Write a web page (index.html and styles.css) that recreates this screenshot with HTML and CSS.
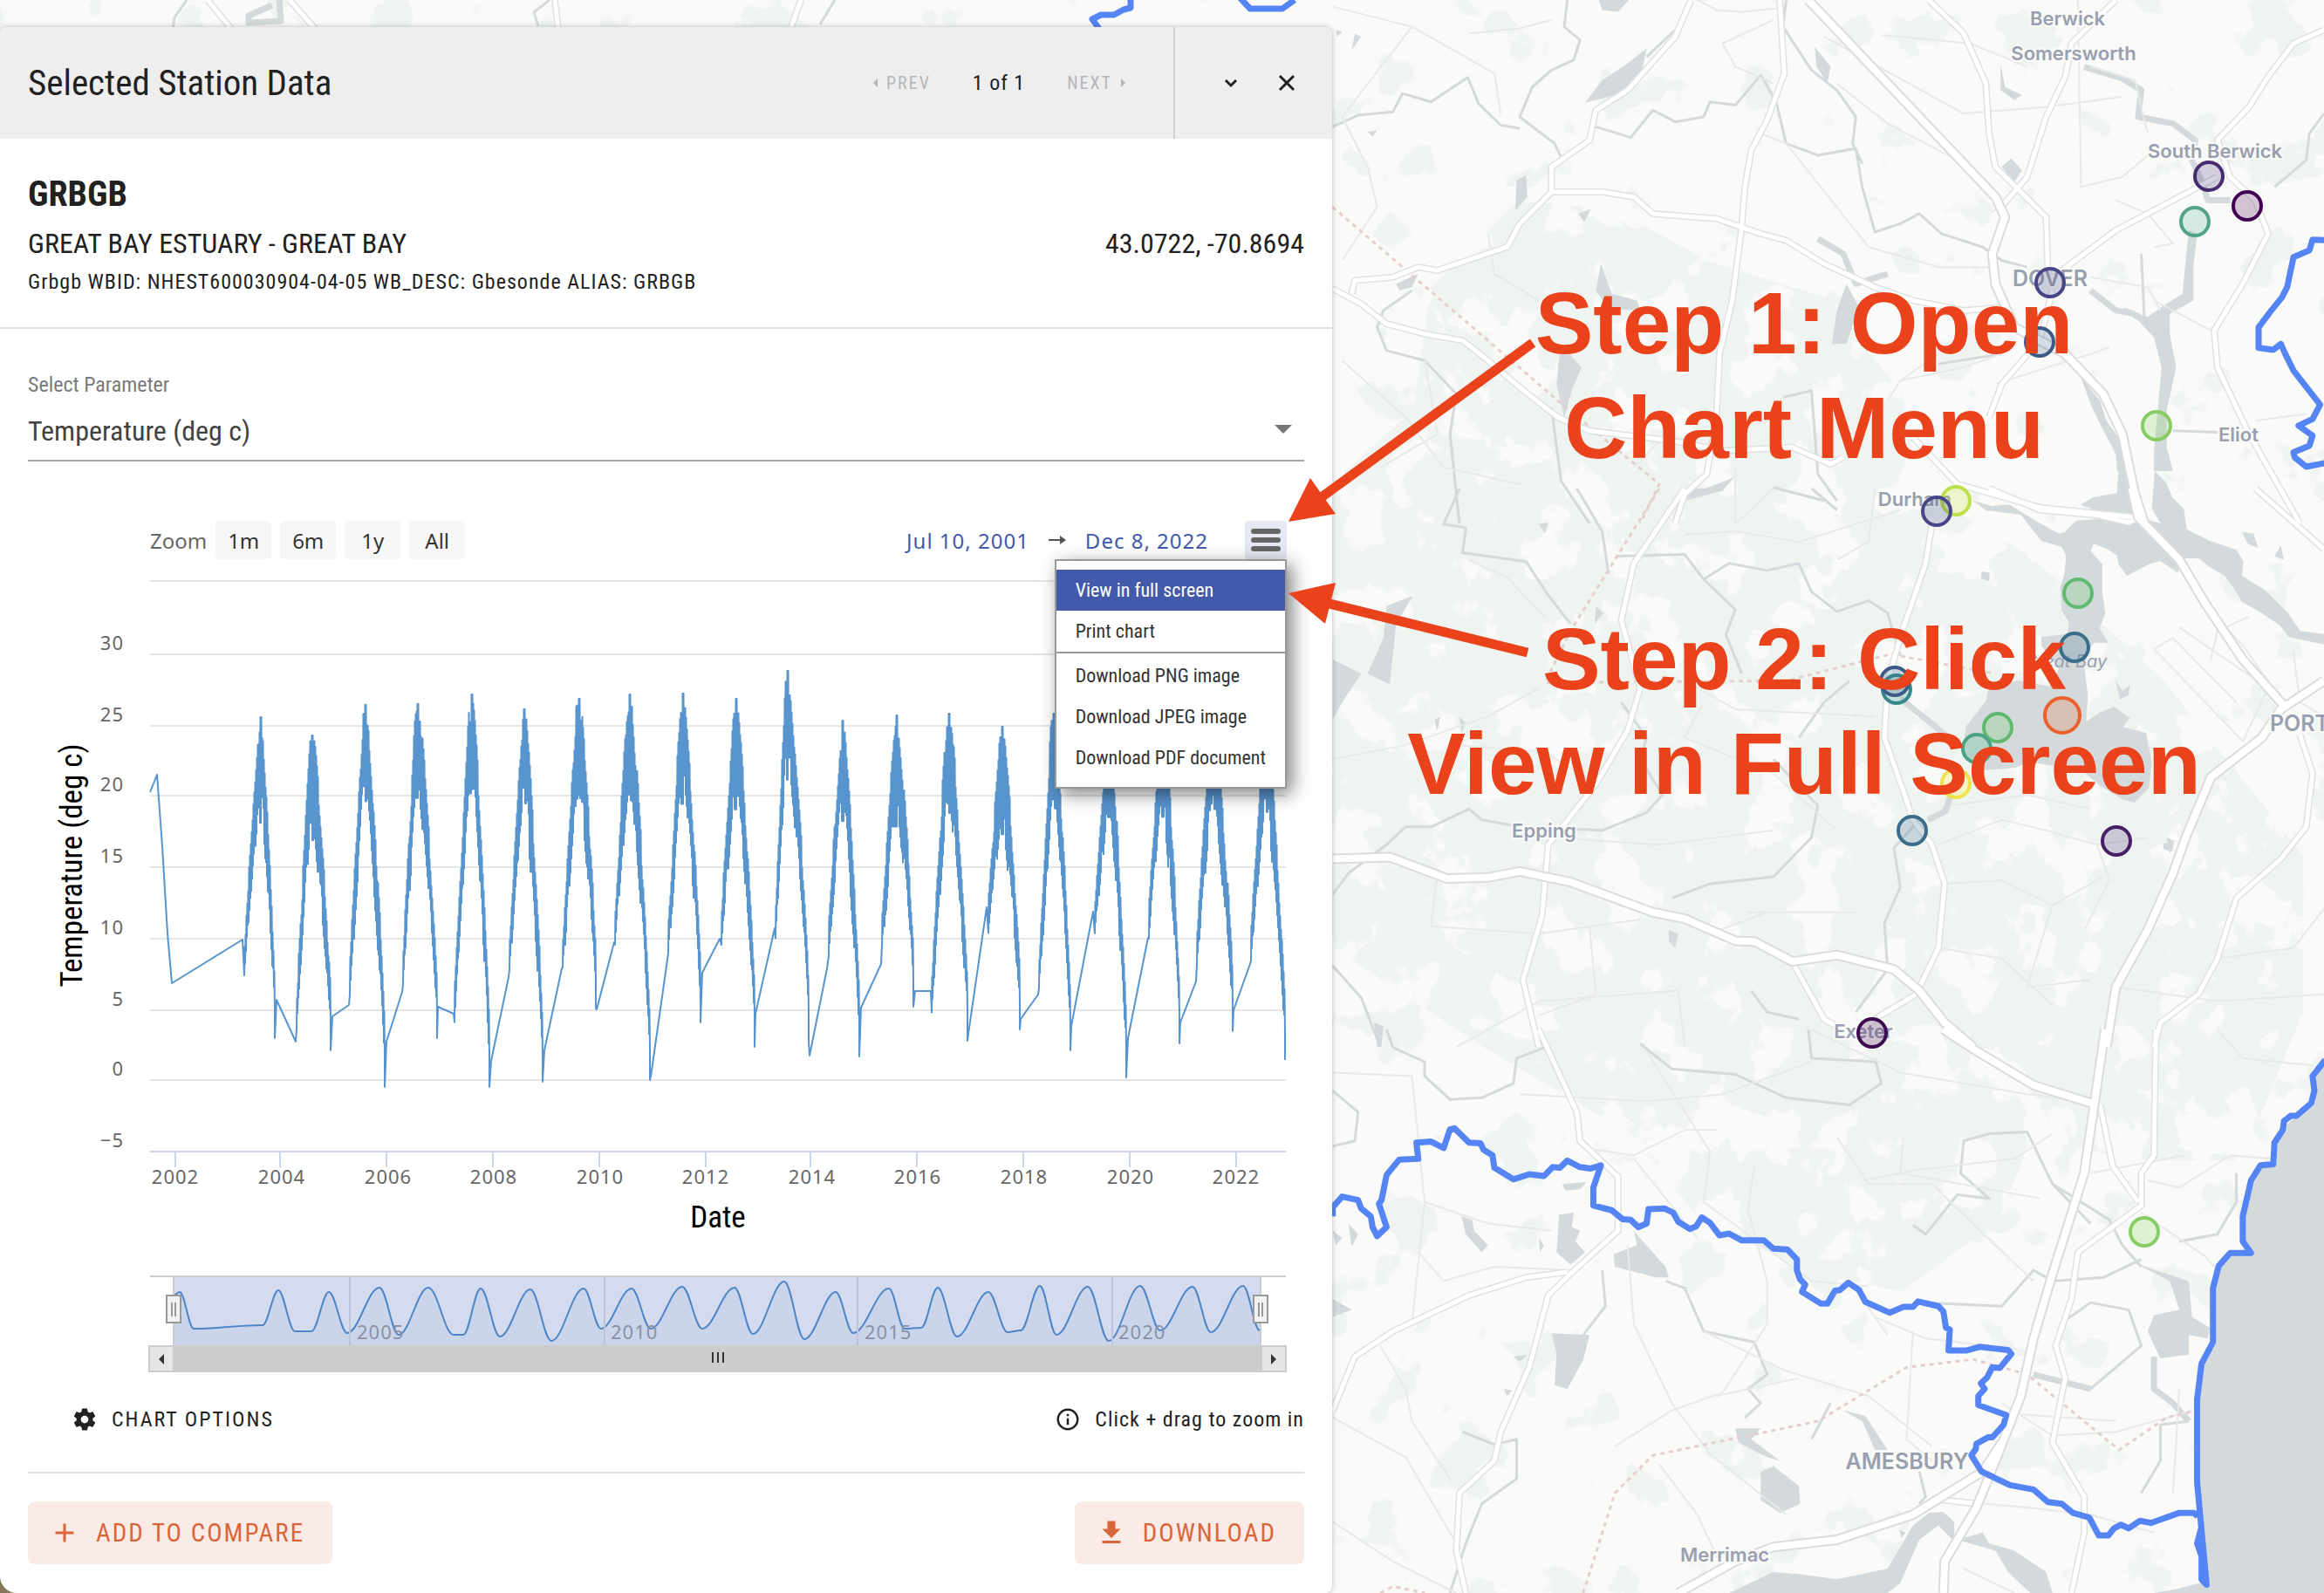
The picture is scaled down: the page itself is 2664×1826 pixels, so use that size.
FILE: index.html
```html
<!DOCTYPE html>
<html lang="en">
<head>
<meta charset="utf-8">
<title>Selected Station Data</title>
<link rel="stylesheet" href="styles.css">
</head>
<body>
<div class="app">
  <svg class="map" viewBox="0 0 2664 1826" preserveAspectRatio="xMinYMin slice" role="img" aria-label="Map of the Great Bay area">
    <defs>
      <filter id="woods" x="0" y="0" width="1" height="1" color-interpolation-filters="sRGB">
        <feTurbulence type="fractalNoise" baseFrequency="0.017 0.015" numOctaves="5" seed="7"/>
        <feColorMatrix values="0 0 0 0 .937  0 0 0 0 .957  0 0 0 0 .945  24 0 0 0 -9.8"/>
        <feComposite in2="SourceGraphic" operator="in"/>
      </filter>
      <filter id="groves" x="0" y="0" width="1" height="1" color-interpolation-filters="sRGB">
        <feTurbulence type="fractalNoise" baseFrequency="0.014" numOctaves="4" seed="21"/>
        <feColorMatrix values="0 0 0 0 .937  0 0 0 0 .957  0 0 0 0 .945  24 0 0 0 -15.4"/>
        <feComposite in2="SourceGraphic" operator="in"/>
      </filter>
      <path id="n-roads" d="M710 0L717 220L690 360L665 450L655 560L650 680L635 900L615 1060L610 1250L595 1420L560 1480L545 1568M570 0L545 110L470 270L420 330L410 420L350 500L350 575L430 575L480 590L510 640L610 655L680 700L720 720L780 790L860 860L920 900L1000 930L1070 920M350 575L300 670L280 740L170 810L140 800L100 830L40 840L35 880M5 865L50 910L90 970L150 1000L210 1020L250 1080L300 1160L360 1250L410 1290L540 1320L620 1350L730 1340L790 1390L810 1370M945 0L1000 100L1035 250L1040 400L1050 500L1130 650L1133 830M1240 0L1170 130L1160 230L1130 350L1100 530L1050 640M1568 90L1520 130L1480 230L1450 320L1400 420L1420 530L1460 600L1480 700L1440 850L1395 990L1400 1100L1450 1300L1530 1568M1140 830L1240 690L1400 530M1140 870L1120 1020L1060 1150L1040 1250M920 1310L990 1450L1120 1520L1275 1550"/>
      <path id="n-major" d="M755 0L1050 590L1065 650L1045 760L1050 850L1080 980L1160 1060L1220 1180L1250 1300L1270 1480L1285 1568"/>
      <path id="c-roads" d="M1040 0L1120 60L1210 75L1260 95L1280 80M560 0L480 210L460 370L490 560L470 680L420 830L345 1000L335 1200L305 1380L330 1568M950 100L940 210L905 390L880 540L875 700L905 850L920 930L950 1000L970 1110L960 1290L925 1420L850 1500M730 1330L780 1490L800 1510M1530 690L1550 800L1540 950L1500 1040L1430 1150L1400 1320L1370 1420L1310 1500L1300 1568M1460 0L1568 170"/>
      <path id="c-major" d="M1265 0L1275 80L1340 200L1380 320L1440 480L1505 610M1568 540L1500 620L1470 700L1390 810L1350 980L1330 1080L1290 1240L1240 1400L1225 1568M5 1040L95 1035L185 1095L250 1092L300 1075L380 1105L510 1190L560 1208L640 1270L670 1272L730 1328L800 1310L890 1350L930 1410L970 1500L1015 1568"/>
      <path id="s-roads" d="M1303 0L1300 350L1280 400L1280 490L1180 620L1170 750L1145 880L1160 970L1140 1150L1190 1300L1190 1400L1170 1568M1215 210L1235 380L1275 480M330 0L390 230L395 310L455 410L455 560L380 680L345 740L315 940L270 1120L260 1200L205 1290L200 1450L215 1568M375 675L310 690L220 740L100 840L40 910L5 1060M950 1305L1020 1320"/>
      <path id="s-major" d="M1223 0L1190 400L1140 680L1110 860L1090 1020L1050 1200L1020 1330L970 1480L968 1568M968 0L1020 60L1110 155L1210 210M550 1568L640 1480L700 1440L800 1420L920 1350L1030 1230L1060 1150"/>
      <path id="t-roads" d="M238 0L266 34M332 0L362 34M918 0L906 34M636 0L640 34"/>
    </defs>
    <rect class="land" width="2664" height="1826"/>
    <path filter="url(#groves)" d="M0 0H2664V1826H1520V40H0Z"/>
    <path filter="url(#woods)" d="M1520 560L1620 470L1640 330L1740 230L1850 240L1960 300L2090 340L2180 450L2200 560L2330 640L2480 780L2560 880L2640 980V1160L2570 1330L2440 1330L2330 1300L2290 1400L2180 1480L2080 1460L1950 1400L1870 1300L1700 1200L1520 1080Z"/>

    <g transform="translate(1524 0) scale(.727 .3827)">
      <path class="water" d="M500 145L490 240L450 285L403 308L430 240L470 190ZM425 0H472L455 35L430 30ZM295 540L310 525L312 590L293 632ZM815 850L835 920L815 1030L792 1030L800 930ZM428 790L445 880L485 900L490 930L440 925L420 870ZM365 1030L397 1100L382 1170L370 1250L358 1150ZM1060 500L1075 475L1092 510L1080 545ZM1058 190L1065 260L1092 285L1080 300L1058 270ZM765 140L790 200L785 250L768 200ZM105 850L140 820L130 860L110 870ZM570 1480L638 1430L620 1470L560 1500ZM392 640L412 625L402 665ZM40 100L50 110L35 150ZM10 90L20 95L12 110ZM60 395L75 390L68 410Z"/>
      <path class="water" d="M1355 690L1368 700L1362 800L1362 900L1325 940L1325 1000L1335 1100L1320 1230L1320 1340L1330 1411H1300L1300 1350L1305 1250L1312 1100L1300 1010L1275 960L1250 930L1255 922L1290 950L1312 920L1345 880L1350 780ZM1185 1130L1215 1200L1225 1260L1255 1340L1258 1411H1242L1240 1360L1215 1270L1200 1210Z"/>
      <path class="river" d="M375 0L370 80L395 120L385 180L350 210L320 260L300 350L355 430L365 470M5 380L45 345L100 335L115 280L160 305L218 232L235 310L270 375L300 385M420 380L475 412L510 330L545 365L590 350L600 305L640 315L680 225L700 290M705 310L720 430L770 465L830 445L840 560L860 695L900 670L930 640L965 700L1030 740L1060 780L1100 800M720 0L715 80L760 210L800 270L830 350L825 430L840 490M130 870L85 930L75 980L90 1050L150 1080L200 1180L190 1300L205 1568M545 90L500 170M350 1220L365 1440L410 1568M715 1190L760 1170L770 1420L800 1500M1568 340L1545 400L1540 480L1490 560M1280 760L1285 960M1330 1290L1400 1295M960 1090L1060 1060M700 1460L780 1500"/>
      <path class="river wide" d="M1190 200L1250 235L1280 270L1275 350L1330 370L1365 420L1360 480L1375 540L1385 600L1420 600M1200 870L1240 930L1270 940M770 715L810 760L830 850L880 820"/>
      <path class="lane" d="M5 20L130 80L20 350L60 500L75 620L20 780M220 100L300 85L350 60M130 80L260 220L270 340M620 130L700 60M580 0L610 30L650 35L710 25M620 130L640 200L700 250M780 110L1000 340L1130 320L1250 290M870 105L1010 130L1100 200M800 250L880 370L1010 500L1060 640M1180 0L1185 560L1250 530L1300 450M1200 200L1270 240L1290 400M680 400L720 430L850 740L960 800L1040 800M1300 740L1330 730L1290 640L1240 600M1200 830L1290 860L1310 930M20 1080L120 1250L180 1400L300 1450M150 1080L170 1300L80 1400M250 700L260 820L330 900M900 1140L1000 1100L1060 1060M1050 1150L1200 1060L1230 1040M880 1200L900 1140L960 1060M480 1400L520 1320M640 1400L640 1568M1460 1260L1540 1240M1400 1000L1300 900"/>
      <path class="dashed" d="M5 620L360 1200L520 1450L490 1568"/>
    </g>

    <g transform="translate(2200 540) scale(.3333)">
      <path class="water" d="M810 0L850 40L870 90L910 130L920 200L1000 240L1090 270L1115 310L1110 360L1190 410L1270 490L1310 550L1392 560V596L1270 570L1240 530L1180 490L1110 450L1080 400L1050 360L1000 330L960 300L900 300L890 350L830 310L790 320L715 360L685 320L680 290L650 270L600 250L590 275L630 320L630 420L640 490L620 540L650 590L600 590L565 650L580 770L575 860L620 830L670 810L725 850L700 880L780 900L800 1000L790 1090L740 1140L700 1130L620 1080L560 1030L380 1000L330 1020L210 1030L150 970L160 880L230 790L240 740L340 720L450 740L480 680L420 600L420 570L510 560L515 520L490 480L485 400L500 350L505 290L490 260L420 240L380 190L350 150L230 135L180 100L250 120L310 115L400 170L480 215L500 210L540 170L620 165L700 180L755 160L830 180L800 130ZM685 0H720L725 90L755 160L700 165L620 140L555 115L600 90L680 75ZM675 720L700 755L725 735L720 770L690 785ZM1110 210L1150 215L1165 265L1130 250ZM215 345L243 350L240 378L212 370ZM840 1280H875L870 1310L840 1300Z"/>
      <path class="river wide" d="M110 1110L90 1170L30 1200"/>
    </g>

    <g transform="translate(1524 560) scale(.727 .4082)">
      <path class="water" d="M132 300L105 380L95 550L60 520L85 420L90 330ZM5 480L50 520L20 600L5 650ZM555 30L600 0H570ZM535 1240L550 1250L545 1290L535 1270ZM330 100L345 95L340 125ZM1505 200L1490 190L1500 160ZM420 330L432 350L418 380ZM1320 980L1332 990L1325 1025ZM70 1500L85 1510L82 1568H75ZM205 640L215 660L208 685ZM165 650L175 640L170 680Z"/>
      <path class="river" d="M205 0L180 100L215 110L210 180L310 205L345 300L380 380M390 0L430 120L440 240M455 190L560 185L590 255L630 210L690 230L740 210L760 290L800 345L850 315L880 350L900 470M590 255L640 340L625 410L650 520M5 1140L30 1080L90 1000L120 950L160 950L220 900L240 930L300 950L430 960L500 910L525 860L490 760L500 700L460 600M930 930L890 1010L900 1120L875 1220L880 1350L830 1470M540 1150L600 1110L700 1090L760 980L770 890L700 760M5 1340L50 1430L80 1568M760 0L800 60M665 1410L690 1470L740 1490M820 540L780 600L740 700"/>
      <path class="river wide" d="M900 590L950 660L975 700"/>
      <path class="lane" d="M220 200L280 250L340 360M560 130L640 120L740 150L900 60M700 0L640 100M860 0L850 150L800 200M5 760L120 720L250 640L330 560M200 720L340 740L420 830M560 540L640 620L860 640M590 600L560 700L700 800L800 960M345 980L520 1000L700 960M170 1080L160 1230L330 1250L490 1210M410 1230L420 1420L330 1480M660 1190L830 1190M600 1250L690 1190M960 1000L1060 930L1130 960L1210 1000L1290 980M970 1110L1060 1100L1140 1170L1220 1090M1140 1170L1100 1400L1200 1380M1210 1000L1230 1100L1190 1240M1240 1400L1400 1440L1568 1420M1400 1320L1520 1290L1568 1180M1430 600L1330 420L1300 450L1440 710L1480 560L1340 390M1390 480L1400 400L1450 360M1370 310L1440 440L1500 590M1200 900L1100 860L980 890M550 1410L330 1440L200 1568M550 1410L560 1568M960 1290L1060 1320L1140 1450M1520 460L1530 600L1568 640"/>
      <path class="dashed" d="M520 0L380 400L340 545L720 540L885 465L1050 520"/>
    </g>

    <g transform="translate(1524 1180) scale(.727 .412)">
      <path class="water" d="M1575 85L1550 130L1555 170L1548 200L1525 240L1500 280L1488 375L1465 380L1450 440L1440 520L1440 590L1455 620L1420 622L1400 660L1393 720V870L1375 930L1368 1030V1260L1375 1400L1383 1535L1340 1555L1300 1568H1575Z"/>
      <path class="water" d="M208 520L225 530L228 560L250 600L240 620L215 570ZM362 515L385 510L382 550L395 560L388 590L403 620L380 655L358 620ZM367 430L405 425L395 445L372 448ZM330 580L338 600L332 620ZM480 560L497 595L530 660L535 690L515 690L450 660L448 625L485 600ZM350 845L410 850L400 920L375 1000L355 990L358 900ZM680 1230L700 1215L740 1270L742 1320L710 1345L680 1310ZM640 1110L680 1110L665 1140L710 1200L690 1190L645 1150ZM1270 650L1320 680L1355 700L1360 800L1388 830L1385 860L1355 850L1355 905L1310 915L1290 840L1300 795L1340 780L1325 700ZM630 1568L700 1510L740 1515L800 1530L880 1500L920 1380L945 1345L968 1342L985 1370L985 1425L960 1380L930 1420L900 1540L880 1568ZM990 1420L1030 1400L1040 1430L1080 1450L1130 1510L1140 1568H1105L1070 1510L1050 1450L1010 1430ZM810 1060L845 1075L880 1170L860 1170L840 1090ZM5 750L35 780L5 800ZM30 540L45 570L35 605ZM5 560L20 580L10 600ZM275 1000L288 1005L280 1020ZM290 910L312 905L300 925ZM898 1390L908 1400L902 1415Z"/>
      <path class="river" d="M90 0L100 50L150 90L150 130L190 195L240 190L290 150L295 80L340 50M490 40L540 110L640 125L720 190L820 210L870 150L860 80M530 700L560 720L590 840L670 870L690 960L660 1000L680 1040L655 1080M1040 290L1000 310L995 400L1040 470L990 460L940 570L920 545M1040 290L1100 285L1140 430L1230 530L1250 600L1280 660M930 760L1060 770L1110 670L1140 700L1220 690L1280 640M1160 810L1200 760L1260 780L1280 880L1200 1000L1110 960M1355 1090L1310 1100L1310 1200L1280 1290M210 1120L260 1155L295 1140V1250L240 1320L215 1430L190 1568M5 170L45 230L40 310L5 325M430 670L435 770L400 850M1340 590L1400 570L1430 480L1430 400M790 1040L760 1140M930 1230L940 1300L930 1320M1200 540L1140 430M755 0L760 80L860 90"/>
      <path class="river wide" d="M1300 910L1300 1000L1330 1040L1355 1090M1110 960L1200 1000"/>
      <path class="lane" d="M5 120L130 130L150 480L130 820M150 480L250 540L350 560M140 620L180 700L260 660L380 670M300 180L500 200L620 180L760 90M400 330L480 350L560 280L610 280M500 60L600 340L590 480L760 700L850 715M760 0L900 120L1100 180L1200 200M670 380L660 500L690 700L690 820L620 1010L540 1060L450 1160M470 600L480 820L540 1040L600 1180L720 1350M590 840L720 950L850 1020L950 1160M800 300L850 430L950 430L1050 600L1110 700M840 420L930 390L1080 360L1140 290M905 300L900 400L1120 470M580 580L480 360M740 970L610 1020M5 1080L120 1190L200 1430M80 880L120 1000L130 1090L190 1250M5 1370L100 1480L200 1568M520 1210L580 1350L620 1500M920 840L910 1140L950 1200M1060 1040L1140 1130L1240 1120L1360 1060M1080 1070L1240 1090M970 1310L1100 1330L1200 1350L1300 1400M1290 420L1340 440L1420 350L1488 360M1280 510L1380 630L1395 660M1400 0L1440 80L1550 100M1200 400L1350 350M1000 1500L1080 1568M860 800L940 860L1085 890M820 700L880 850M1340 1000L1330 1290"/>
      <path class="dashed" d="M400 1568L450 1290L510 1185L770 1090L910 940L1015 918L1100 960L1245 1170L1320 1080L1368 1060M80 1568L100 1550L150 1568"/>
    </g>

    <path class="river" d="M214 0L200 20L198 34M630 0L612 14L617 30M957 0L940 28"/>
    <path class="river wide" d="M320 0L322 24L285 26L285 18L312 6"/>

    <g class="casing">
      <use href="#t-roads"/>
      <use href="#n-roads" transform="translate(1524 0) scale(.727 .3827)"/>
      <use href="#c-roads" transform="translate(1524 560) scale(.727 .4082)"/>
      <use href="#s-roads" transform="translate(1524 1180) scale(.727 .412)"/>
    </g>
    <g class="road">
      <use href="#t-roads"/>
      <use href="#n-roads" transform="translate(1524 0) scale(.727 .3827)"/>
      <use href="#c-roads" transform="translate(1524 560) scale(.727 .4082)"/>
      <use href="#s-roads" transform="translate(1524 1180) scale(.727 .412)"/>
    </g>
    <g class="casing major">
      <use href="#n-major" transform="translate(1524 0) scale(.727 .3827)"/>
      <use href="#c-major" transform="translate(1524 560) scale(.727 .4082)"/>
      <use href="#s-major" transform="translate(1524 1180) scale(.727 .412)"/>
    </g>
    <g class="road major">
      <use href="#n-major" transform="translate(1524 0) scale(.727 .3827)"/>
      <use href="#c-major" transform="translate(1524 560) scale(.727 .4082)"/>
      <use href="#s-major" transform="translate(1524 1180) scale(.727 .412)"/>
    </g>

    <g class="places">
      <text x="2370" y="29">Berwick</text>
      <text x="2377" y="69">Somersworth</text>
      <text x="2539" y="181">South Berwick</text>
      <text x="2350" y="328" class="city">DOVER</text>
      <text x="2566" y="506">Eliot</text>
      <text x="2195" y="580">Durham</text>
      <text x="2368" y="765" class="bay">Great Bay</text>
      <text x="1770" y="960">Epping</text>
      <text x="2136" y="1190">Exeter</text>
      <text x="2186" y="1684" class="city">AMESBURY</text>
      <text x="1977" y="1790">Merrimac</text>
      <text x="2636" y="838" class="city">PORT</text>
    </g>

    <g transform="translate(1524 0) scale(.727 .3827)">
      <path class="border" d="M1575 720L1550 718L1545 750L1520 770L1510 860L1502 890L1485 930L1465 980L1465 1042L1488 1048L1500 1030L1507 1060L1520 1110L1562 1212L1550 1255L1528 1275L1550 1305L1545 1335L1520 1355L1522 1370L1540 1398L1575 1385"/>
    </g>
    <g transform="translate(1524 1180) scale(.727 .412)">
      <path class="border" d="M5 520V495L20 465L45 475L50 498L65 520L68 550L75 575L90 550L78 485L82 475L90 405L110 362L140 360L137 315L160 312L180 330L190 278L197 275L220 315L238 317L243 335L257 350L260 385L290 417L315 403L338 408L352 383L363 385L375 365L395 383L412 387L428 378L416 440V490L445 503L462 528L475 530L487 550L500 540L503 500L528 498L542 510L550 535L568 555L578 548L587 523L600 538L615 573L630 568L650 587H685L700 610L722 612L737 640V670L742 695L750 710L745 730L775 763H785L797 727L805 725L818 705L835 725L845 758L883 788L905 772H920L928 757L960 770L968 785L972 830L978 835L976 893H1005L1025 883L1070 892L1075 903L1057 942L1045 940L1037 968L1027 985L1033 1000L1023 1020V1045L1067 1073L1063 1100L1045 1135H1038L1020 1153L1019 1167L1012 1185L1028 1230L1073 1268L1110 1280L1133 1315L1155 1320L1172 1345L1198 1358L1213 1408H1228L1237 1388L1248 1378L1260 1388L1278 1367L1295 1373L1340 1345H1363L1369 1355M1570 85L1550 130L1553 170L1548 205L1525 240H1516L1505 255L1503 280L1490 315L1488 375L1468 378L1453 420L1440 520V590L1453 622H1420L1402 658L1393 720V870L1375 930L1368 1030V1260L1383 1545L1375 1530V1465L1368 1430L1374 1390"/>
    </g>
    <path class="border" d="M1296 -4V9L1288 11L1277 17H1262L1252 22L1265 40M1420 -4L1433 10H1470L1484 0"/>

    <g class="pins">
      <circle cx="2532" cy="202" r="16" fill="#46327e" stroke="#452b6f"/>
      <circle cx="2576" cy="236" r="16" fill="#440154" stroke="#440154"/>
      <circle cx="2516" cy="254" r="16" fill="#4fb392" stroke="#52a388"/>
      <circle cx="2350" cy="324" r="16" fill="#414487" stroke="#484587"/>
      <circle cx="2338" cy="392" r="16" fill="#31688e" stroke="#3c5a88"/>
      <circle cx="2472" cy="488" r="16" fill="#7ad151" stroke="#86cd63"/>
      <circle cx="2242" cy="574" r="16" fill="#bddf26" stroke="#bddf4a"/>
      <circle cx="2220" cy="586" r="16" fill="#414487" stroke="#484587"/>
      <circle cx="2382" cy="680" r="16" fill="#5ec962" stroke="#5fba70"/>
      <circle cx="2378" cy="742" r="16" fill="#31688e" stroke="#3a6d8a"/>
      <circle cx="2174" cy="790" r="16" fill="#21918c" stroke="#35888a"/>
      <circle cx="2172" cy="781" r="16" fill="#31688e" stroke="#3c5a88"/>
      <circle cx="2290" cy="834" r="16" fill="#5ec962" stroke="#5fba70"/>
      <circle cx="2266" cy="858" r="16" fill="#35b779" stroke="#4aa384"/>
      <circle cx="2242" cy="898" r="16" fill="#fde725" stroke="#f0e24a"/>
      <circle cx="2364" cy="820" r="20" fill="#e8622c" stroke="#ea5f2b"/>
      <circle cx="2192" cy="952" r="16" fill="#31688e" stroke="#3a6d8a"/>
      <circle cx="2426" cy="964" r="16" fill="#482878" stroke="#452069"/>
      <circle cx="2146" cy="1184" r="16" fill="#440154" stroke="#3d0a50"/>
      <circle cx="2458" cy="1412" r="16" fill="#7ad151" stroke="#86cd63"/>
    </g>
  </svg>

  <main class="panel">
    <header class="panel-header">
      <h1 class="panel-title">Selected Station Data</h1>
      <nav class="pager" aria-label="Stations">
        <button class="pager-button" type="button" disabled><svg width="6" height="10" viewBox="0 0 6 10" aria-hidden="true"><path d="M6 0L1 5L6 10Z" fill="currentColor"/></svg>PREV</button>
        <span class="pager-count">1 of 1</span>
        <button class="pager-button" type="button" disabled>NEXT<svg width="6" height="10" viewBox="0 0 6 10" aria-hidden="true"><path d="M0 0L5 5L0 10Z" fill="currentColor"/></svg></button>
      </nav>
      <div class="panel-actions">
        <button class="icon-button" type="button" aria-label="Collapse"><svg width="20" height="20" viewBox="0 0 20 20" aria-hidden="true"><path d="M4 7L10 13L16 7" fill="none" stroke="currentColor" stroke-width="3"/></svg></button>
        <button class="icon-button" type="button" aria-label="Close"><svg width="20" height="20" viewBox="0 0 20 20" aria-hidden="true"><path d="M2 2L18 18M18 2L2 18" fill="none" stroke="currentColor" stroke-width="3"/></svg></button>
      </div>
    </header>

    <section class="station">
      <h2 class="station-id">GRBGB</h2>
      <div class="station-row">
        <p>GREAT BAY ESTUARY - GREAT BAY</p>
        <p>43.0722, -70.8694</p>
      </div>
      <p class="station-note">Grbgb WBID: NHEST600030904-04-05 WB_DESC: Gbesonde ALIAS: GRBGB</p>
    </section>

    <section class="details">
      <label class="field-label" for="parameter">Select Parameter</label>
      <div class="field">
        <select id="parameter"><option>Temperature (deg c)</option></select>
        <svg width="20" height="10" viewBox="0 0 20 10" aria-hidden="true"><path d="M0 0H20L10 10Z" fill="#757575"/></svg>
      </div>

      <div class="chart-toolbar">
        <span class="zoom-label">Zoom</span>
        <button class="zoom-button" type="button">1m</button>
        <button class="zoom-button" type="button">6m</button>
        <button class="zoom-button" type="button">1y</button>
        <button class="zoom-button" type="button">All</button>
        <div class="range">
          <a href="#from">Jul 10, 2001</a>
          <svg width="20" height="12" viewBox="0 0 20 12" aria-hidden="true"><path d="M0 6H17" stroke="#555" stroke-width="2"/><path d="M13 1L20 6L13 11Z" fill="#555"/></svg>
          <a href="#to">Dec 8, 2022</a>
        </div>
        <div class="export">
          <button class="export-button" type="button" aria-label="View chart menu"><svg width="34" height="28" viewBox="0 0 34 28" aria-hidden="true"><path d="M3 4H31M3 14H31M3 24H31" stroke="#666" stroke-width="6" stroke-linecap="round"/></svg></button>
          <ul class="export-menu">
            <li><button class="menu-item active" type="button">View in full screen</button></li>
            <li><button class="menu-item" type="button">Print chart</button></li>
            <li class="menu-divider"></li>
            <li><button class="menu-item" type="button">Download PNG image</button></li>
            <li><button class="menu-item" type="button">Download JPEG image</button></li>
            <li><button class="menu-item" type="button">Download PDF document</button></li>
          </ul>
        </div>
      </div>

      <svg class="chart" viewBox="32 641 1463 939" role="img" aria-label="Water temperature by date">
        <path class="grid" d="M172 666H1474M172 750H1474M172 832H1474M172 912H1474M172 994H1474M172 1076H1474M172 1158H1474M172 1238H1474"/>
        <path class="axis" d="M172 1320H1474M201 1320V1338M321 1320V1338M443 1320V1338M565 1320V1338M687 1320V1338M809 1320V1338M929 1320V1338M1051 1320V1338M1173 1320V1338M1295 1320V1338M1417 1320V1338"/>
        <path class="series" id="series"/>
        <g class="tick tick-y">
          <text x="142" y="745">30</text><text x="142" y="827">25</text><text x="142" y="907">20</text><text x="142" y="989">15</text><text x="142" y="1071">10</text><text x="142" y="1153">5</text><text x="142" y="1233">0</text><text x="142" y="1315">−5</text>
        </g>
        <g class="tick tick-x">
          <text x="201" y="1357">2002</text><text x="323" y="1357">2004</text><text x="445" y="1357">2006</text><text x="566" y="1357">2008</text><text x="688" y="1357">2010</text><text x="809" y="1357">2012</text><text x="931" y="1357">2014</text><text x="1052" y="1357">2016</text><text x="1174" y="1357">2018</text><text x="1296" y="1357">2020</text><text x="1417" y="1357">2022</text>
        </g>
        <text class="axis-title" transform="translate(94 992) rotate(-90)">Temperature (deg c)</text>
        <text class="axis-title" x="823" y="1407">Date</text>

        <path class="nav-area" id="nav-area"/>
        <path class="nav-line" id="nav-line"/>
        <path class="nav-grid" d="M401 1464V1542M693 1464V1542M983 1464V1542M1275 1464V1542"/>
        <g class="tick nav-tick">
          <text x="409" y="1535">2005</text><text x="700" y="1535">2010</text><text x="991" y="1535">2015</text><text x="1282" y="1535">2020</text>
        </g>
        <rect class="nav-mask" x="199" y="1463" width="1246" height="79"/>
        <path class="nav-outline" d="M172 1463H1474M199 1463V1542M1445 1463V1542"/>
        <rect class="scroll-thumb" x="199" y="1542" width="1247" height="31"/>
        <rect class="scroll-arrow" x="171" y="1543" width="28" height="29"/>
        <rect class="scroll-arrow" x="1446" y="1543" width="28" height="29"/>
        <path d="M188 1552V1564L182 1558ZM1457 1552V1564L1463 1558Z" fill="#333"/>
        <path d="M817 1550V1562M823 1550V1562M829 1550V1562" stroke="#333" stroke-width="2"/>
        <g class="handle">
          <rect x="191" y="1485" width="16" height="31"/><path d="M197 1493V1509M201 1493V1509"/>
          <rect x="1437" y="1485" width="16" height="31"/><path d="M1443 1493V1509M1447 1493V1509"/>
        </g>
      </svg>

      <div class="chart-footer">
        <button class="options" type="button"><svg width="30" height="30" viewBox="0 0 24 24" aria-hidden="true"><path fill="currentColor" d="M12 15.5A3.5 3.5 0 0 1 8.500 12 3.500 3.500 0 0 1 12 8.500a3.500 3.500 0 0 1 3.500 3.500 3.500 3.500 0 0 1-3.500 3.500m7.430-2.530c.04-.32.07-.64.07-.97s-.03-.66-.07-1l2.110-1.630c.19-.15.24-.42.12-.64l-2-3.460c-.12-.22-.39-.31-.61-.22l-2.490 1c-.52-.39-1.060-.73-1.690-.98l-.37-2.650A.506.506 0 0 0 14 2h-4c-.25 0-.46.18-.5.42l-.37 2.650c-.63.25-1.170.59-1.690.98l-2.490-1c-.22-.09-.49 0-.61.22l-2 3.460c-.13.22-.07.49.12.64L4.570 11c-.04.34-.07.67-.07 1s.03.65.07.97l-2.110 1.660c-.19.15-.25.42-.12.64l2 3.460c.12.22.39.3.61.22l2.490-1.010c.52.4 1.060.74 1.690.99l.37 2.650c.04.24.25.42.5.42h4c.25 0 .46-.18.5-.42l.37-2.650c.63-.26 1.170-.59 1.690-.99l2.490 1.010c.22.08.49 0 .61-.22l2-3.460c.12-.22.07-.49-.12-.64z"/></svg>CHART OPTIONS</button>
        <p class="hint"><svg width="30" height="30" viewBox="0 0 24 24" aria-hidden="true"><path fill="currentColor" d="M11 9h2V7h-2m1 13c-4.410 0-8-3.590-8-8s3.590-8 8-8 8 3.590 8 8-3.590 8-8 8m0-18A10 10 0 0 0 2 12a10 10 0 0 0 10 10 10 10 0 0 0 10-10A10 10 0 0 0 12 2m-1 15h2v-6h-2z"/></svg>Click + drag to zoom in</p>
      </div>

      <footer class="panel-footer">
        <button class="action" type="button"><svg width="36" height="36" viewBox="0 0 24 24" aria-hidden="true"><path fill="currentColor" d="M19 13h-6v6h-2v-6H5v-2h6V5h2v6h6z"/></svg>ADD TO COMPARE</button>
        <button class="action" type="button"><svg width="36" height="36" viewBox="0 0 24 24" aria-hidden="true"><path fill="currentColor" d="M5 20h14v-2H5m14-9h-4V3H9v6H5l7 7z"/></svg>DOWNLOAD</button>
      </footer>
    </section>
  </main>

  <svg class="notes" viewBox="0 0 2664 1826" preserveAspectRatio="xMinYMin slice">
    <path d="M1757 393L1512 572" stroke="#ea431c" stroke-width="11"/>
    <path d="M1477 598L1502 548L1531 589Z" fill="#ea431c"/>
    <path d="M1751 748L1520 691" stroke="#ea431c" stroke-width="11"/>
    <path d="M1477 680L1531 668L1519 715Z" fill="#ea431c"/>
    <text x="2068" y="405">Step 1: Open</text>
    <text x="2068" y="525">Chart Menu</text>
    <text x="2068" y="790">Step 2: Click</text>
    <text x="2068" y="910">View in Full Screen</text>
  </svg>
</div>
<script src="chart.js"></script>
</body>
</html>
```
FILE: styles.css
```css
* { box-sizing: border-box; }

body {
  margin: 0;
  background: #82795c;
  color: #212121;
  font-family: "Roboto Condensed", "Liberation Sans Narrow", Roboto, sans-serif;
}

h1, h2, p, ul { margin: 0; padding: 0; }
button, select { font: inherit; color: inherit; letter-spacing: inherit; border: 0; background: none; padding: 0; }
svg { flex: none; }

.app {
  position: relative;
  display: grid;
  grid-template-columns: 57.32% 1fr;
  min-height: 100vh;
  overflow: hidden;
  border-bottom-left-radius: 20px;
}

/* Base map */
.map, .notes { position: absolute; inset: 0; width: 100%; height: 100%; }
.map path { vector-effect: non-scaling-stroke; fill: none; stroke-linejoin: round; }
.land { fill: #fafaf8; }
.map path[filter] { fill: #eef3f0; }
.map .water { fill: #d4dadc; }
.river { stroke: #d4dadc; stroke-width: 3; }
.river.wide { stroke-width: 7; }
.lane { stroke: #e8e9e8; stroke-width: 2; }
.casing { stroke: #e0e1e1; stroke-width: 8; }
.casing.major { stroke: #dcdcdc; stroke-width: 12; }
.road { stroke: #fff; stroke-width: 5; }
.road.major { stroke-width: 8; }
.dashed { stroke: #e3cfd0; stroke-width: 3; stroke-dasharray: 5 5; }
.border { stroke: #5585f5; stroke-width: 7; }
.places text {
  font: 600 22px Inter, sans-serif;
  fill: #98a0af;
  text-anchor: middle;
  paint-order: stroke;
  stroke: #fafaf8;
  stroke-width: 4px;
}
.places .city { font-size: 25px; }
.places .bay { font-size: 20px; font-style: italic; font-weight: 400; stroke: none; }
.pins circle { fill-opacity: .22; stroke-width: 4; }

/* Annotations */
.notes { pointer-events: none; }
.notes text { font: bold 100px "Liberation Sans", sans-serif; fill: #ea431c; text-anchor: middle; }

/* Panel */
.panel {
  position: relative;
  margin-top: 31px;
  background: #fff;
  border-radius: 8px 8px 8px 0;
  box-shadow: 0 0 6px rgba(0, 0, 0, .25);
}
.panel-header {
  display: flex;
  align-items: center;
  height: 128px;
  padding-left: 32px;
  background: #eee;
  border-radius: 8px 8px 0 0;
}
.panel-title { font-size: 41px; font-weight: 400; }
.pager { display: flex; align-items: center; gap: 48px; margin-left: auto; padding-right: 54px; }
.pager-button { display: flex; align-items: center; gap: 10px; color: #b5b5b5; font-size: 20px; letter-spacing: 2px; }
.pager-count { font-size: 24px; letter-spacing: 1px; }
.panel-actions { display: flex; align-self: stretch; padding: 0 20px 0 32px; border-left: 2px solid #d2d2d2; }
.icon-button { display: grid; place-items: center; width: 64px; }

.station { padding: 36px 32px; border-bottom: 2px solid #e2e2e2; }
.station-id { font-size: 40px; line-height: 56px; font-weight: 700; }
.station-row { display: flex; justify-content: space-between; font-size: 32px; line-height: 56px; }
.station-note { font-size: 24px; line-height: 32px; letter-spacing: 1px; }

.details { padding: 48px 32px 32px; }
.field-label { display: block; color: #7a7a7a; font-size: 24px; line-height: 32px; }
.field { display: grid; align-items: center; height: 72px; border-bottom: 2px solid #a6a6a6; }
.field > * { grid-area: 1 / 1; }
.field select { appearance: none; width: 100%; height: 70px; color: #424242; font-size: 32px; padding-top: 4px; }
.field svg { justify-self: end; margin-right: 14px; }

/* Chart */
.chart-toolbar {
  display: flex;
  align-items: center;
  gap: 10px;
  margin-top: 68px;
  padding: 0 20px 0 140px;
  font: 24px "Noto Sans", sans-serif;
}
.zoom-label { color: #666; }
.zoom-button { width: 64px; height: 44px; border-radius: 4px; background: #f7f7f7; color: #333; }
.range { display: flex; align-items: center; gap: 22px; margin-left: auto; margin-right: 32px; letter-spacing: 1px; }
.range a { color: #425aa9; text-decoration: none; }
.export { position: relative; }
.export-button { display: grid; place-items: center; width: 48px; height: 44px; border-radius: 4px; background: #e6e9f3; }
.export-menu {
  position: absolute;
  top: 44px;
  right: 0;
  padding: 10px 0;
  list-style: none;
  background: #fff;
  border: 2px solid #999;
  box-shadow: 6px 6px 20px rgba(0, 0, 0, .5);
  font: 22px "Roboto Condensed", "Liberation Sans Narrow", Roboto, sans-serif;
}
.menu-item { display: block; width: 100%; height: 47px; padding: 0 22px; color: #333; text-align: left; white-space: nowrap; }
.menu-item.active { background: #425aa9; color: #fff; }
.menu-divider { height: 2px; margin-bottom: 2px; background: #999; }

.chart { display: block; width: 100%; height: auto; }
.chart path { fill: none; }
.chart path[fill] { fill: #333; }
.grid { stroke: #e6e6e6; stroke-width: 2; }
.axis { stroke: #ccd6eb; stroke-width: 2; }
.series { stroke: #4688c8; stroke-width: 2; stroke-opacity: .9; stroke-linejoin: round; }
.tick { font: 22px "Noto Sans", sans-serif; letter-spacing: 1px; fill: #666; }
.tick-y { text-anchor: end; }
.tick-x { text-anchor: middle; }
.axis-title { font-size: 35px; fill: #000; text-anchor: middle; }
.chart .nav-area { fill: #4688c8; fill-opacity: .07; }
.nav-line { stroke: #4688c8; stroke-width: 2; }
.nav-grid { stroke: #e0e0e0; stroke-width: 2; }
.nav-tick { fill: #999; }
.nav-mask { fill: #667fc2; fill-opacity: .28; }
.nav-outline { stroke: #ccc; stroke-width: 2; }
.scroll-thumb { fill: #ccc; }
.scroll-arrow { fill: #e6e6e6; stroke: #ccc; stroke-width: 2; }
.handle rect { fill: #f2f2f2; stroke: #999; stroke-width: 2; }
.handle path { stroke: #999; stroke-width: 2; }

.chart-footer {
  display: flex;
  align-items: center;
  justify-content: space-between;
  margin-top: 27px;
  padding: 0 0 40px 50px;
  border-bottom: 2px solid #e2e2e2;
  font-size: 24px;
  line-height: 40px;
}
.options, .hint { display: flex; align-items: center; gap: 16px; }
.options { letter-spacing: 2px; }
.hint { letter-spacing: 1px; }

.panel-footer { display: flex; justify-content: space-between; padding-top: 32px; }
.action {
  display: flex;
  align-items: center;
  gap: 18px;
  height: 72px;
  padding: 0 32px 0 24px;
  border-radius: 8px;
  background: #fbebe6;
  color: #d9663a;
  font-size: 29px;
  letter-spacing: 2px;
}
```
FILE: chart.js
```js
// Each season: start x, start y, peak x, peak y, end x, end y,
// then the pair of points that bridges the winter gap.
const seasons = [
  [280, 1129, 299, 822, 315, 1190, 317, 1146, 339, 1194],
  [340, 1190, 358, 843, 379, 1204, 381, 1165, 400, 1152],
  [401, 1150, 419, 808, 441, 1246, 443, 1194, 461, 1137],
  [462, 1142, 479, 807, 501, 1190, 502, 1154, 520, 1162],
  [521, 1182, 541, 796, 561, 1246, 563, 1216, 583, 1120],
  [584, 1125, 601, 813, 622, 1240, 624, 1204, 644, 1110],
  [645, 1125, 664, 801, 683, 1156, 684, 1157, 704, 1080],
  [705, 1093, 722, 796, 745, 1238, 746, 1234, 765, 1100],
  [766, 1108, 783, 795, 803, 1172, 805, 1115, 825, 1076],
  [827, 1090, 844, 801, 865, 1200, 866, 1162, 888, 1064],
  [889, 1086, 903, 769, 927, 1194, 928, 1210, 948, 1110],
  [950, 1103, 966, 826, 985, 1211, 987, 1155, 1010, 1105],
  [1011, 1100, 1028, 820, 1047, 1154, 1049, 1136, 1067, 1136],
  [1068, 1169, 1088, 818, 1109, 1193, 1110, 1185, 1131, 1040],
  [1133, 1076, 1149, 833, 1169, 1180, 1170, 1168, 1190, 1140],
  [1191, 1147, 1208, 818, 1227, 1204, 1228, 1176, 1253, 1045],
  [1255, 1083, 1271, 820, 1291, 1235, 1293, 1190, 1316, 1075],
  [1317, 1082, 1333, 820, 1352, 1196, 1353, 1172, 1371, 1125],
  [1372, 1115, 1391, 820, 1413, 1182, 1414, 1158, 1433, 1105],
  [1434, 1112, 1451, 820, 1473, 1215]
];

let seed = 11;
const random = () => (seed = (seed * 16807) % 2147483647) / 2147483647;

const points = [[172, 908], [180, 888], [186, 970], [192, 1070], [197, 1127], [278, 1077]];
for (const [sx, sy, px, py, ex, ey, ...gap] of seasons) {
  let i = 0;
  let high = 0;
  let low = 0;
  for (let x = sx; x <= ex; x += 0.5) {
    const rising = x < px;
    const t = rising ? (x - sx) / (px - sx) : (ex - x) / (ex - px);
    const base = rising ? sy - 25 : ey - 45;
    const s = Math.min(1, t / (rising ? 0.82 : 0.86));
    const shape = rising ? s : Math.pow(s, 0.85);
    const middle = base + (py + 68 - base) * shape;
    const reach = 22 + 38 * Math.min(1, t * 1.3);
    // The daily range holds for a few samples, then jumps.
    if (i % 5 === 0) {
      high = reach * (0.55 + 0.5 * random());
      low = reach * (0.35 + 0.65 * random());
    }
    points.push([x, Math.max(py, middle + (i++ % 2 ? -high : low))]);
    if (Math.abs(x - px) < 0.6) points.push([x, py]);
  }
  points.push([ex, ey]);
  for (let g = 0; g < gap.length; g += 2) points.push([gap[g], gap[g + 1]]);
}
document.getElementById('series').setAttribute('d',
  'M' + points.map(([x, y]) => x.toFixed(1) + ' ' + y.toFixed(1)).join('L'));

// Alternating highs and lows of the overview line.
const overview = [
  [200, 1484], [206, 1481], [222, 1523], [301, 1519], [319, 1479], [338, 1526], [357, 1526],
  [377, 1481], [398, 1528], [435, 1476], [457, 1530], [491, 1476], [520, 1530], [531, 1530],
  [551, 1477], [573, 1532], [608, 1478], [632, 1537], [669, 1477], [689, 1523], [724, 1477],
  [746, 1523], [782, 1475], [805, 1523], [842, 1476], [863, 1529], [899, 1469], [922, 1535],
  [958, 1481], [978, 1528], [1019, 1477], [1037, 1523], [1056, 1522], [1075, 1476], [1097, 1532],
  [1133, 1481], [1155, 1527], [1170, 1525], [1192, 1474], [1211, 1530], [1247, 1475], [1271, 1537],
  [1307, 1474], [1330, 1525], [1367, 1475], [1388, 1527], [1425, 1474], [1444, 1525]
];
let line = 'M' + overview[0].join(' ');
for (let i = 1; i < overview.length; i++) {
  const [ax, ay] = overview[i - 1];
  const [bx, by] = overview[i];
  const h = (bx - ax) * 0.36;
  line += `C${ax + h} ${ay} ${bx - h} ${by} ${bx} ${by}`;
}
document.getElementById('nav-line').setAttribute('d', line);
document.getElementById('nav-area').setAttribute('d', line + 'V1542H200Z');
```
